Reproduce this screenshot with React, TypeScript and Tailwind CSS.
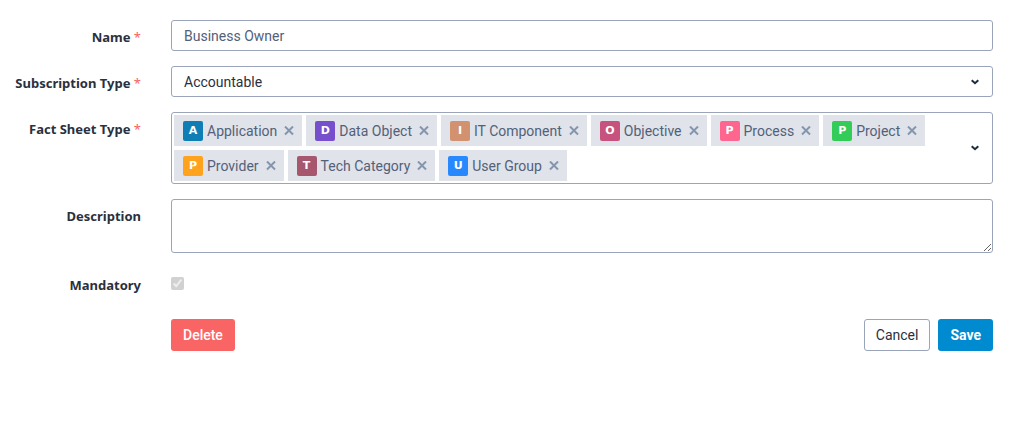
import { useState } from "react";
import type { ReactNode } from "react";

type FactSheet = {
  name: string;
  color: string;
};

const FACT_SHEETS: FactSheet[] = [
  { name: "Application", color: "bg-[#0f7eb5]" },
  { name: "Data Object", color: "bg-[#774fcc]" },
  { name: "IT Component", color: "bg-[#d29270]" },
  { name: "Objective", color: "bg-[#c7527d]" },
  { name: "Process", color: "bg-[#fe6690]" },
  { name: "Project", color: "bg-[#33cc58]" },
  { name: "Provider", color: "bg-[#ffa31f]" },
  { name: "Tech Category", color: "bg-[#a6566d]" },
  { name: "User Group", color: "bg-[#2889ff]" },
];

function Chevron() {
  return (
    <svg className="h-2 w-2" viewBox="0 0 8 8" fill="none" stroke="#1d2d3e" strokeWidth="2">
      <path d="M0.7 2.2 4 5.2 7.3 2.2" />
    </svg>
  );
}

function Row({
  label,
  htmlFor,
  required,
  children,
}: {
  label: string;
  htmlFor: string;
  required?: boolean;
  children: ReactNode;
}) {
  return (
    <div className="flex gap-[30px]">
      <label
        htmlFor={htmlFor}
        className="w-[141px] shrink-0 pt-[7px] text-right font-['Noto_Sans',sans-serif] text-[13px] leading-5 font-bold text-[#2a303d]"
      >
        {label}
        {required && <span className="font-normal text-[#f95f62]"> *</span>}
      </label>
      <div className="min-w-0 flex-1">{children}</div>
    </div>
  );
}

function Chip({ sheet, onRemove }: { sheet: FactSheet; onRemove: () => void }) {
  return (
    <span className="flex h-[31px] items-center bg-[#e0e3e9] pr-2 pl-[9px] text-[#526179]">
      <span
        className={`mr-1 flex size-5 items-center justify-center rounded-xs font-['DejaVu_Sans',sans-serif] text-[11px] font-bold text-white ${sheet.color}`}
      >
        {sheet.name[0]}
      </span>
      {sheet.name}
      <button
        type="button"
        aria-label={`Remove ${sheet.name}`}
        onClick={onRemove}
        className="ml-[7px] cursor-pointer"
      >
        <svg className="size-[10px]" viewBox="0 0 10 10" stroke="#8496ae" strokeWidth="2">
          <path d="M1 0.5 9 8.5M9 0.5 1 8.5" />
        </svg>
      </button>
    </span>
  );
}

export default function App() {
  const [sheets, setSheets] = useState(FACT_SHEETS);

  return (
    <form
      className="flex flex-col gap-[15px] bg-white pt-5 pr-[31px] pb-5 font-[Roboto,sans-serif] text-sm"
      onSubmit={(e) => e.preventDefault()}
    >
      <Row label="Name" htmlFor="name" required>
        <input
          id="name"
          type="text"
          defaultValue="Business Owner"
          className="block h-[31px] w-full rounded-[3px] border border-[#9aa5ba] px-3 text-[#526179]"
        />
      </Row>

      <Row label="Subscription Type" htmlFor="subscription-type" required>
        <div className="relative">
          <select
            id="subscription-type"
            className="block h-[31px] w-full appearance-none rounded-[3px] border border-[#9aa5ba] bg-white px-3 text-[#2a303d]"
          >
            <option>Accountable</option>
            <option>Responsible</option>
            <option>Observer</option>
          </select>
          <span className="pointer-events-none absolute inset-y-0 right-[14px] flex items-center">
            <Chevron />
          </span>
        </div>
      </Row>

      <Row label="Fact Sheet Type" htmlFor="fact-sheet-type" required>
        <div className="flex rounded-[3px] border border-[#9aa5ba]">
          <div className="flex flex-1 flex-wrap gap-1 p-[2px]">
            {sheets.map((sheet) => (
              <Chip
                key={sheet.name}
                sheet={sheet}
                onRemove={() => setSheets(sheets.filter((s) => s !== sheet))}
              />
            ))}
          </div>
          <button
            id="fact-sheet-type"
            type="button"
            aria-label="Show fact sheet types"
            className="flex cursor-pointer items-center px-[13px]"
          >
            <Chevron />
          </button>
        </div>
      </Row>

      <Row label="Description" htmlFor="description">
        <textarea
          id="description"
          className="block h-[54px] w-full resize-y rounded-[3px] border border-[#9aa5ba] px-3 py-1 text-[#526179]"
        />
      </Row>

      <Row label="Mandatory" htmlFor="mandatory">
        <input
          id="mandatory"
          type="checkbox"
          defaultChecked
          disabled
          className="mt-[9px] block size-[13px]"
        />
      </Row>

      {/* Actions */}
      <div className="mt-[9px] flex gap-2 pl-[171px]">
        <button
          type="button"
          className="mr-auto h-8 rounded-[3px] bg-[#f96464] px-3 font-medium text-white"
        >
          Delete
        </button>
        <button
          type="button"
          className="h-8 rounded-[3px] border border-[#9aa5ba] bg-white px-[11px] text-[#2a303d]"
        >
          Cancel
        </button>
        <button type="submit" className="h-8 rounded-[3px] bg-[#008acf] px-3 font-bold text-white">
          Save
        </button>
      </div>
    </form>
  );
}
